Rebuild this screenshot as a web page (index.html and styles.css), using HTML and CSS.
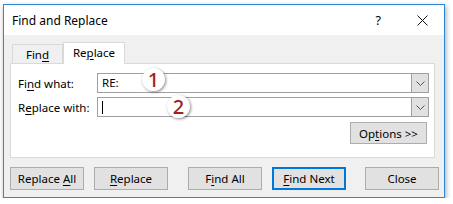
FILE: index.html
```html
<!DOCTYPE html>
<html lang="en">

<head>
  <meta charset="UTF-8">
  <title>Find and Replace</title>
  <link rel="stylesheet" href="styles.css">
</head>

<body>
  <div class="window">
    <div class="titlebar">
      <span class="title">Find and Replace</span>
      <span class="help">?</span>
      <svg class="close-x" width="11" height="11" viewBox="0 0 11 11">
        <path d="M0.5 0.5 L10.5 10.5 M10.5 0.5 L0.5 10.5" stroke="#111" stroke-width="1" fill="none" />
      </svg>
    </div>

    <div class="body">
      <div class="tabs">
        <div class="tab">Fin<u>d</u></div>
        <div class="tab active">Re<u>p</u>lace</div>
      </div>

      <div class="panel">
        <div class="row">
          <label class="label">Fi<u>n</u>d what:</label>
          <div class="combo">
            <span class="value">RE:</span>
            <span class="drop"><svg width="9" height="5" viewBox="0 0 9 5"><path d="M0.5 0.5 L4.5 4.5 L8.5 0.5" stroke="#555" fill="none" /></svg></span>
          </div>
        </div>
        <div class="row">
          <label class="label">R<u>e</u>place with:</label>
          <div class="combo">
            <span class="value"><span class="caret"></span></span>
            <span class="drop"><svg width="9" height="5" viewBox="0 0 9 5"><path d="M0.5 0.5 L4.5 4.5 L8.5 0.5" stroke="#555" fill="none" /></svg></span>
          </div>
        </div>
        <div class="options-row">
          <button class="btn options">Op<u>t</u>ions &gt;&gt;</button>
        </div>

        <span class="marker m1">1</span>
        <span class="marker m2">2</span>
      </div>

      <div class="buttons">
        <button class="btn">Replace <u>A</u>ll</button>
        <button class="btn"><u>R</u>eplace</button>
        <button class="btn">F<u>i</u>nd All</button>
        <button class="btn primary"><u>F</u>ind Next</button>
        <button class="btn">Close</button>
      </div>
    </div>
  </div>
</body>

</html>
```

FILE: styles.css
```css
body {
  margin: 0;
  background: #fff;
  font-family: "Noto Sans", "Open Sans", sans-serif;
  font-size: 11.5px;
  color: #000;
}

u {
  text-decoration-thickness: 1px;
  text-underline-offset: 2px;
}

.window {
  margin: 4px 0 0 3px;
  width: 440px;
  height: 192px;
  border: 1px solid #2b88d8;
  background: #f0f0f0;
  box-shadow: 1px 2px 5px rgba(0, 0, 0, 0.35);
  display: flex;
  flex-direction: column;
}

/* title bar */
.titlebar {
  height: 30px;
  background: #fff;
  display: flex;
  align-items: center;
  padding-left: 8px;
  font-size: 12px;
}

.title {
  flex: 1;
}

.help {
  margin-right: 36px;
  font-size: 12.5px;
}

.close-x {
  margin-right: 16px;
}

/* tabs */
.body {
  flex: 1;
  padding: 7px 0 0 6px;
}

.tabs {
  display: flex;
  align-items: flex-end;
  height: 21px;
  padding-left: 2px;
}

.tab {
  height: 18px;
  width: 49px;
  border: 1px solid #d9d9d9;
  border-bottom: none;
  background: #f0f0f0;
  text-align: center;
  line-height: 19px;
}

.tab.active {
  height: 21px;
  width: 60px;
  background: #fff;
  margin-bottom: -1px;
  position: relative;
  z-index: 1;
  line-height: 20px;
}

.panel {
  position: relative;
  width: 425px;
  background: #fff;
  border: 1px solid #d9d9d9;
  padding: 9px 0 0 7px;
  box-sizing: border-box;
  height: 95px;
}

.row {
  display: flex;
  align-items: center;
  height: 20px;
  margin-bottom: 4px;
}

.label {
  width: 79px;
}

.combo {
  width: 332px;
  height: 20px;
  box-sizing: border-box;
  border: 1px solid #a0a0a0;
  display: flex;
}

.value {
  flex: 1;
  padding-left: 4px;
  line-height: 18px;
}

.caret {
  display: inline-block;
  width: 1px;
  height: 13px;
  background: #000;
  vertical-align: middle;
}

.drop {
  width: 16px;
  background: #e1e1e1;
  border-left: 1px solid #a0a0a0;
  display: flex;
  align-items: center;
  justify-content: center;
}

.options-row {
  display: flex;
  justify-content: flex-end;
  padding-right: 7px;
  margin-top: 5px;
}

/* buttons */
.btn {
  font: inherit;
  color: #000;
  background: #e1e1e1;
  border: 1px solid #adadad;
  height: 23px;
  width: 74px;
  padding: 0;
}

.options {
  width: 77px;
  height: 22px;
}

.btn.primary {
  border: 2px solid #0078d7;
}

.buttons {
  display: flex;
  gap: 10px;
  margin-top: 9px;
}

.buttons .btn:nth-child(3) {
  margin-left: 10px;
}

.buttons .btn:nth-child(5) {
  margin-left: 9px;
}

/* number markers over the fields */
.marker {
  position: absolute;
  width: 23px;
  height: 23px;
  border-radius: 50%;
  background: #fff;
  box-shadow: 1px 1px 3px rgba(0, 0, 0, 0.45);
  color: #a3221b;
  font-size: 20px;
  font-weight: 500;
  line-height: 23px;
  text-align: center;
}

.m1 {
  left: 131px;
  top: 4px;
}

.m2 {
  left: 156px;
  top: 31px;
}
```
